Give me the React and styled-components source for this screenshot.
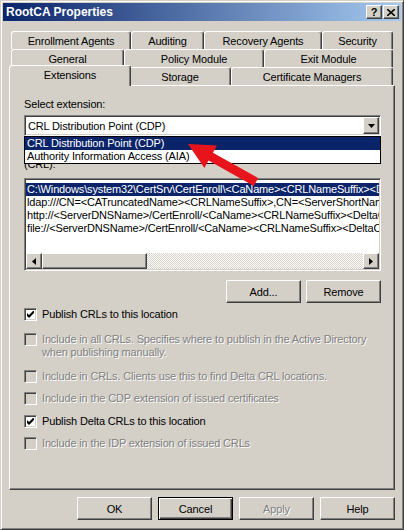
import React from 'react';
import styled, { createGlobalStyle, css } from 'styled-components';

const Global = createGlobalStyle`
  html, body { margin: 0; padding: 0; background: #d4d0c8; }
  body { font-family: "Liberation Sans", Arial, sans-serif; font-size: 11px; letter-spacing: -0.15px; color: #000; }
  * { box-sizing: border-box; }
`;

const raised = css`
  border: 1px solid;
  border-color: #fff #404040 #404040 #fff;
  box-shadow: inset -1px -1px #808080, inset 1px 1px #d4d0c8;
  background: #d4d0c8;
`;

const sunken = css`
  border: 1px solid;
  border-color: #808080 #fff #fff #808080;
  box-shadow: inset 1px 1px #404040, inset -1px -1px #d4d0c8;
`;

const Window = styled.div`
  position: relative;
  width: 404px;
  height: 530px;
  border: 1px solid;
  border-color: #d4d0c8 #404040 #404040 #d4d0c8;
  box-shadow: inset 1px 1px #fff, inset -1px -1px #808080;
  padding: 2px;
  display: flex;
  flex-direction: column;
  background: #d4d0c8;
`;

const TitleBar = styled.div`
  height: 18px;
  display: flex;
  align-items: center;
  padding: 0 2px 0 3px;
  background: linear-gradient(to right, #0a246a, #a6caf0);
  color: #fff;
  font-weight: bold;
  font-size: 12px;
  letter-spacing: 0;
`;

const Title = styled.span`
  flex: 1;
`;

const CaptionButton = styled.div`
  ${raised};
  width: 16px;
  height: 14px;
  display: flex;
  align-items: center;
  justify-content: center;
  color: #000;
  font-size: 11px;
  font-weight: bold;
  line-height: 1;
  & + & { margin-left: 1px; }
`;

const Tabs = styled.div`
  margin: 10px 0 0 6px;
  width: 386px;
  padding: 0 2px;
`;

const TabRow = styled.div`
  display: flex;
  height: 18px;
`;

const Tab = styled.div`
  flex: none;
  width: ${(p) => p.$w + (p.$active ? 4 : 0)}px;
  height: 18px;
  border: 1px solid;
  border-bottom: none;
  border-color: #fff #404040 transparent #fff;
  box-shadow: inset -1px 0 #808080;
  border-radius: 3px 3px 0 0;
  display: flex;
  align-items: center;
  justify-content: center;
  background: #d4d0c8;
  white-space: nowrap;
  ${(p) =>
    p.$active &&
    css`
      position: relative;
      z-index: 1;
      height: 21px;
      margin: -2px -2px -1px -2px;
      padding-bottom: 2px;
    `}
`;

const Panel = styled.div`
  margin-left: 6px;
  width: 386px;
  height: 405px;
  border: 1px solid;
  border-color: #fff #404040 #404040 #fff;
  box-shadow: inset -1px -1px #808080;
  padding: 12px 13px 0 14px;
  display: flex;
  flex-direction: column;
`;

const Label = styled.div`
  line-height: 13px;
  white-space: nowrap;
  overflow: hidden;
  margin-top: ${(p) => p.$mt || 0}px;
`;

const Combo = styled.div`
  ${sunken};
  position: relative;
  margin-top: 4px;
  height: 21px;
  background: #fff;
  display: flex;
  align-items: center;
  padding: 0 1px 0 2px;
`;

const ComboText = styled.span`
  flex: 1;
  padding-left: 1px;
`;

const DropButton = styled.div`
  ${raised};
  width: 16px;
  height: 17px;
  display: flex;
  align-items: center;
  justify-content: center;
`;

const DropList = styled.div`
  position: absolute;
  left: -1px;
  right: -1px;
  top: calc(100% + 1px);
  border: 1px solid #000;
  background: #fff;
  z-index: 2;
`;

const DropItem = styled.div`
  height: 13px;
  line-height: 13px;
  padding-left: 2px;
  white-space: nowrap;
  ${(p) => p.$selected && css`background: #0a246a; color: #fff;`}
`;

const ListBox = styled.div`
  ${sunken};
  margin-top: 7px;
  height: 93px;
  background: #fff;
  display: flex;
  flex-direction: column;
  padding: 1px;
`;

const ListRows = styled.div`
  flex: 1;
  padding-top: 3px;
  overflow: hidden;
`;

const ListRow = styled.div`
  height: 13px;
  line-height: 13px;
  padding-left: 1px;
  white-space: nowrap;
  overflow: hidden;
  ${(p) => p.$selected && css`background: #0a246a; color: #fff;`}
`;

const ScrollBar = styled.div`
  display: flex;
  height: 16px;
`;

const ScrollArrow = styled.div`
  ${raised};
  width: 16px;
  height: 16px;
  display: flex;
  align-items: center;
  justify-content: center;
`;

const Thumb = styled.div`
  ${raised};
  width: 105px;
  height: 16px;
`;

const Track = styled.div`
  flex: 1;
  background: repeating-conic-gradient(#fff 0 25%, #d4d0c8 0 50%) 0 0 / 2px 2px;
`;

const ButtonRow = styled.div`
  display: flex;
  justify-content: flex-end;
  gap: ${(p) => p.$gap}px;
  margin-top: ${(p) => p.$mt}px;
  padding-right: ${(p) => p.$pr || 0}px;
`;

const Button = styled.div`
  ${raised};
  width: 75px;
  height: 23px;
  display: flex;
  align-items: center;
  justify-content: center;
  ${(p) =>
    p.$default &&
    css`
      border: 1px solid #000;
      box-shadow: inset 1px 1px #fff, inset -1px -1px #404040, inset -2px -2px #808080;
    `}
  ${(p) =>
    p.$disabled &&
    css`
      color: #808080;
      text-shadow: 1px 1px #fff;
    `}
`;

const CheckRow = styled.div`
  display: flex;
  align-items: flex-start;
  margin-top: ${(p) => p.$mt}px;
  line-height: 13px;
  ${(p) =>
    p.$disabled &&
    css`
      color: #808080;
      text-shadow: 1px 1px #fff;
    `}
`;

const Box = styled.div`
  ${sunken};
  flex: none;
  width: 13px;
  height: 13px;
  background: ${(p) => (p.$disabled ? '#d4d0c8' : '#fff')};
  display: flex;
  align-items: center;
  justify-content: center;
  margin-right: 5px;
`;

const Arrow = styled.svg`
  position: absolute;
  left: 179px;
  top: 137px;
  z-index: 5;
  pointer-events: none;
`;

const Tri = ({ dir }) => {
  const d = {
    down: 'M0 0 H7 L3.5 4 Z',
    left: 'M4 0 V7 L0 3.5 Z',
    right: 'M0 0 V7 L4 3.5 Z',
  }[dir];
  const w = dir === 'down' ? 7 : 4;
  const h = dir === 'down' ? 4 : 7;
  return (
    <svg width={w} height={h} viewBox={`0 0 ${w} ${h}`}>
      <path d={d} fill="#000" />
    </svg>
  );
};

const Check = () => (
  <svg width="7" height="7" viewBox="0 0 7 7">
    <path d="M0 2 L2 4 L7 -1 L7 2 L2 7 L0 5 Z" fill="#000" />
  </svg>
);

const CheckItem = ({ checked, disabled, mt, children }) => (
  <CheckRow $mt={mt} $disabled={disabled}>
    <Box $disabled={disabled}>{checked && <Check />}</Box>
    <span>{children}</span>
  </CheckRow>
);

export default function App() {
  return (
    <>
      <Global />
      <Window>
        <TitleBar>
          <Title>RootCA Properties</Title>
          <CaptionButton>?</CaptionButton>
          <CaptionButton>
            <svg width="8" height="7" viewBox="0 0 8 7">
              <path d="M0 0 L8 7 M8 0 L0 7" stroke="#000" strokeWidth="1.6" />
            </svg>
          </CaptionButton>
        </TitleBar>

        <Tabs>
          <TabRow>
            <Tab $w={120}>Enrollment Agents</Tab>
            <Tab $w={73}>Auditing</Tab>
            <Tab $w={118}>Recovery Agents</Tab>
            <Tab $w={71}>Security</Tab>
          </TabRow>
          <TabRow>
            <Tab $w={113}>General</Tab>
            <Tab $w={140}>Policy Module</Tab>
            <Tab $w={129}>Exit Module</Tab>
          </TabRow>
          <TabRow>
            <Tab $w={118} $active>Extensions</Tab>
            <Tab $w={102}>Storage</Tab>
            <Tab $w={162}>Certificate Managers</Tab>
          </TabRow>
        </Tabs>

        <Panel>
          <Label>Select extension:</Label>
          <Combo>
            <ComboText>CRL Distribution Point (CDP)</ComboText>
            <DropButton>
              <Tri dir="down" />
            </DropButton>
            <DropList>
              <DropItem $selected>CRL Distribution Point (CDP)</DropItem>
              <DropItem>Authority Information Access (AIA)</DropItem>
            </DropList>
          </Combo>
          <Label $mt={9}>
            Specify locations from which users can obtain a certificate revocation list
            <br />
            (CRL):
          </Label>
          <ListBox>
            <ListRows>
              <ListRow $selected>
                {'C:\\Windows\\system32\\CertSrv\\CertEnroll\\<CaName><CRLNameSuffix><DeltaCRLAllowed>.crl'}
              </ListRow>
              <ListRow>
                {'ldap:///CN=<CATruncatedName><CRLNameSuffix>,CN=<ServerShortName>,CN=CDP,CN=Public Key Services'}
              </ListRow>
              <ListRow>
                {'http://<ServerDNSName>/CertEnroll/<CaName><CRLNameSuffix><DeltaCRLAllowed>.crl'}
              </ListRow>
              <ListRow>
                {'file://<ServerDNSName>/CertEnroll/<CaName><CRLNameSuffix><DeltaCRLAllowed>.crl'}
              </ListRow>
            </ListRows>
            <ScrollBar>
              <ScrollArrow>
                <Tri dir="left" />
              </ScrollArrow>
              <Thumb />
              <Track />
              <ScrollArrow>
                <Tri dir="right" />
              </ScrollArrow>
            </ScrollBar>
          </ListBox>

          <ButtonRow $gap={5} $mt={9}>
            <Button>Add...</Button>
            <Button>Remove</Button>
          </ButtonRow>

          <CheckItem checked mt={5}>Publish CRLs to this location</CheckItem>
          <CheckItem disabled mt={12}>
            Include in all CRLs. Specifies where to publish in the Active Directory
            <br />
            when publishing manually.
          </CheckItem>
          <CheckItem disabled mt={11}>Include in CRLs. Clients use this to find Delta CRL locations.</CheckItem>
          <CheckItem disabled mt={9}>Include in the CDP extension of issued certificates</CheckItem>
          <CheckItem checked mt={10}>Publish Delta CRLs to this location</CheckItem>
          <CheckItem disabled mt={9}>Include in the IDP extension of issued CRLs</CheckItem>
        </Panel>

        <ButtonRow $gap={6} $mt={7} $pr={6}>
          <Button>OK</Button>
          <Button $default>Cancel</Button>
          <Button $disabled>Apply</Button>
          <Button>Help</Button>
        </ButtonRow>

        <Arrow width="85" height="52" viewBox="0 0 85 52">
          <path
            d="M8 6 L37 7.4 L32.9 14.8 L78.2 40.1 L73.8 47.9 L28.5 22.6 L24.4 30 Z"
            fill="#e8141c"
          />
        </Arrow>
      </Window>
    </>
  );
}
